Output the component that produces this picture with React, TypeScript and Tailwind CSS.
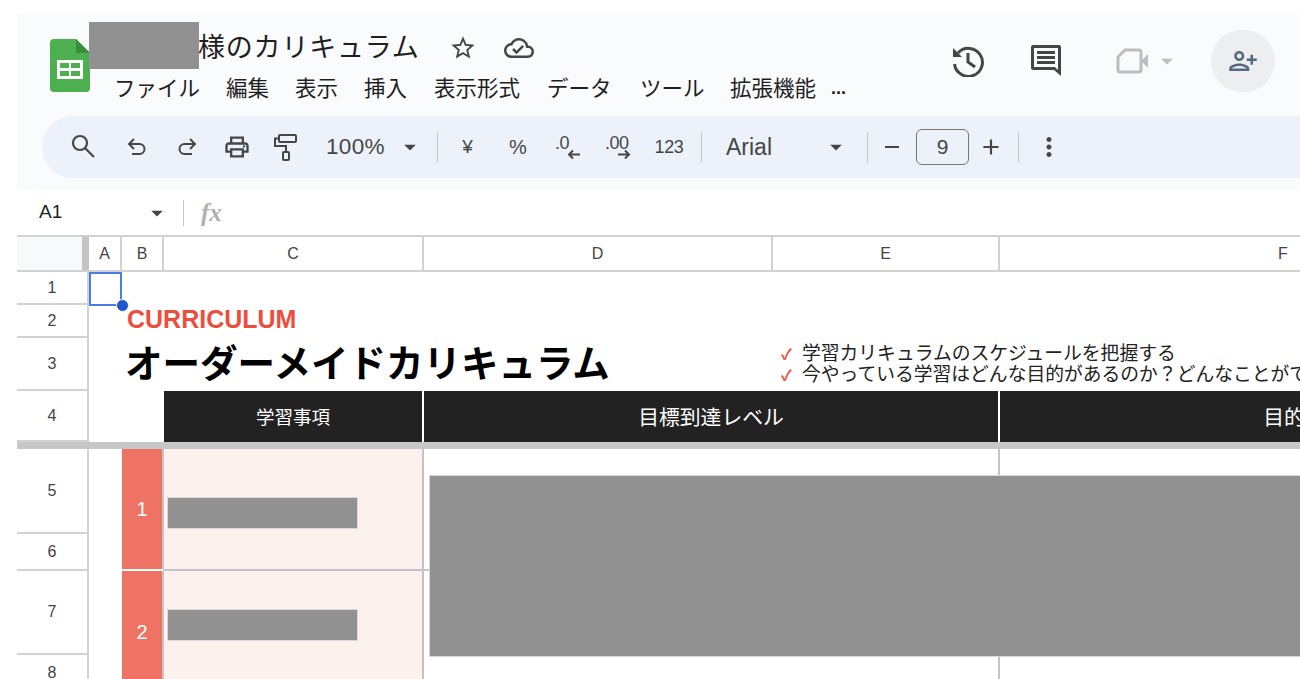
import React from "react";
import {
  MdOutlinePrint,
  MdStarBorder,
  MdOutlineCloudDone,
  MdPersonAddAlt,
  MdMoreVert,
  MdAdd,
  MdRemove,
  MdArrowDropDown,
} from "react-icons/md";

const menuItems = [
  { label: "ファイル", w: "w-[112px]" },
  { label: "編集", w: "w-[69px]" },
  { label: "表示", w: "w-[69px]" },
  { label: "挿入", w: "w-[70px]" },
  { label: "表示形式", w: "w-[113px]" },
  { label: "データ", w: "w-[93px]" },
  { label: "ツール", w: "w-[90px]" },
  { label: "拡張機能", w: "w-[101px]" },
];

const jp = "font-['Noto_Sans_CJK_JP','Noto_Sans',sans-serif]";
const sans = "font-['Liberation_Sans',Arial,sans-serif]";

const SheetsLogo = () => (
  <svg width="40" height="53" viewBox="0 0 40 53">
    <path d="M4 0H26L40 14V49a4 4 0 0 1-4 4H4a4 4 0 0 1-4-4V4a4 4 0 0 1 4-4z" fill="#4caf50" />
    <path d="M26 0L40 14H26z" fill="#388e3c" />
    <rect x="7" y="21" width="26" height="19" fill="#fff" />
    <rect x="10" y="24" width="9" height="5" fill="#4caf50" />
    <rect x="21" y="24" width="9" height="5" fill="#4caf50" />
    <rect x="10" y="32" width="9" height="5" fill="#4caf50" />
    <rect x="21" y="32" width="9" height="5" fill="#4caf50" />
  </svg>
);

const SearchIcon = () => (
  <svg width="24" height="24" viewBox="0 0 24 24" fill="none" stroke="#444746" strokeWidth="2.2">
    <circle cx="9" cy="9" r="7" />
    <path d="M14 14L23 23" />
  </svg>
);

const UndoIcon = () => (
  <svg width="20" height="20" viewBox="0 0 20 20" fill="none" stroke="#444746" strokeWidth="2">
    <path d="M2 7H12.5a5 5 0 0 1 0 10H5" />
    <path d="M7 2L2 7L7 12" />
  </svg>
);

const RedoIcon = () => (
  <svg width="20" height="20" viewBox="0 0 20 20" fill="none" stroke="#444746" strokeWidth="2">
    <path d="M18 7H7.5a5 5 0 0 0 0 10H15" />
    <path d="M13 2L18 7L13 12" />
  </svg>
);

const RollerIcon = () => (
  <svg width="23" height="27" viewBox="0 0 23 27" fill="none" stroke="#444746" strokeWidth="2">
    <rect x="5" y="1" width="17" height="7" rx="1" />
    <path d="M5 4.5H1V12H12V18" />
    <rect x="9" y="18" width="6" height="8" rx="1" />
  </svg>
);

const HistoryIcon = () => (
  <svg width="32" height="32" viewBox="0 0 32 32" fill="none">
    <path d="M6 8A14 14 0 1 1 2.5 19" stroke="#444746" strokeWidth="3" />
    <path d="M1 3L1 12L10 12z" fill="#444746" />
    <path d="M16 8V17L23 22" stroke="#444746" strokeWidth="3" />
  </svg>
);

const CommentIcon = () => (
  <svg width="32" height="32" viewBox="0 0 32 32" fill="#444746">
    <path d="M3 0H29a2 2 0 0 1 2 2V31L24 25H3a2 2 0 0 1-2-2V2a2 2 0 0 1 2-2zM4 3V22H25L28 25V3z" fillRule="evenodd" />
    <rect x="7" y="6" width="18" height="3" />
    <rect x="7" y="11" width="18" height="3" />
    <rect x="7" y="16" width="18" height="3" />
  </svg>
);

const VideoIcon = () => (
  <svg width="32" height="26" viewBox="0 0 32 26" fill="none">
    <path d="M9 2H23a2 2 0 0 1 2 2V22a2 2 0 0 1-2 2H4a2 2 0 0 1-2-2V9z" stroke="#bdbdbd" strokeWidth="3" />
    <path d="M25 13L32 6V20z" fill="#bdbdbd" />
  </svg>
);

const DecimalIcon = ({ text, right }: { text: string; right?: boolean }) => (
  <div className="relative w-[34px] h-[36px] pl-[5px] pt-[2px]">
    <span className={`${sans} block text-[18px] leading-[24px] font-medium text-[#444746] tracking-[-0.5px]`}>{text}</span>
    <svg
      className={`absolute top-[20px] ${right ? "left-[18px]" : "left-[17px]"}`}
      width="13"
      height="11"
      viewBox="0 0 13 11"
      fill="none"
      stroke="#444746"
      strokeWidth="2"
    >
      {right ? <path d="M0 5.5H11M7 1.5L11 5.5L7 9.5" /> : <path d="M13 5.5H2M6 1.5L2 5.5L6 9.5" />}
    </svg>
  </div>
);

const Sep = () => <div className="w-[1px] h-[31px] bg-[#c7c7c7]" />;

const RowNum = ({ n, className }: { n: number; className: string }) => (
  <div
    className={`${className} col-start-1 flex items-center justify-center border-b-2 border-r-2 border-[#d2d2d2] text-[16px] text-[#444]`}
  >
    {n}
  </div>
);

export default function App() {
  return (
    <div className={`w-[1300px] h-[679px] overflow-hidden bg-white pl-[17px] pt-[14px] flex flex-col ${sans}`}>
      {/* Docs header */}
      <div className="h-[176px] shrink-0 bg-[#f9fbfd] flex flex-col">
        <div className="h-[102px] flex">
          <div className="pl-[33px] pt-[25px] w-[72px] shrink-0">
            <SheetsLogo />
          </div>
          <div className="pt-[8px]">
            <div className="flex items-center h-[47px]">
              <div className="w-[110px] h-[47px] bg-[#919191]" />
              <span className={`${jp} -ml-[1px] mt-[1px] text-[27px] text-[#1f1f1f] tracking-[0.8px] whitespace-nowrap`}>様のカリキュラム</span>
              <MdStarBorder className="ml-[29px] mt-[4px] text-[#444746]" size={28} />
              <MdOutlineCloudDone className="ml-[27px] mt-[4px] text-[#444746]" size={30} />
            </div>
            <div className={`${jp} flex items-center h-[24px] mt-[6px] ml-[25px] text-[21.5px] text-[#1f1f1f] whitespace-nowrap`}>
              {menuItems.map((item) => (
                <span key={item.label} className={item.w}>
                  {item.label}
                </span>
              ))}
              <span className={`${sans} text-[18px] font-bold mt-[2px]`}>...</span>
            </div>
          </div>
          <div className="ml-auto pr-[25px] pt-[16px] flex items-start">
            <div className="flex items-center h-[62px]">
              <HistoryIcon />
              <div className="ml-[46px]">
                <CommentIcon />
              </div>
              <div className="ml-[54px]">
                <VideoIcon />
              </div>
              <MdArrowDropDown className="ml-[5px] text-[#bdbdbd]" size={28} />
              <div className="ml-[30px] w-[64px] h-[62px] rounded-full bg-[#eceef0] flex items-center justify-center">
                <MdPersonAddAlt className="text-[#56677f]" size={30} />
              </div>
            </div>
          </div>
        </div>

        {/* Toolbar */}
        <div className="ml-[25px] h-[62px] rounded-l-[31px] bg-[#edf2fa] flex items-center text-[#444746]">
          <div className="w-[53px] flex justify-end -mt-[3px]">
            <SearchIcon />
          </div>
          <div className="w-[52px] flex justify-end">
            <UndoIcon />
          </div>
          <div className="w-[50px] flex justify-end">
            <RedoIcon />
          </div>
          <div className="w-[54px] flex justify-end">
            <MdOutlinePrint size={28} />
          </div>
          <div className="w-[46px] flex justify-end">
            <RollerIcon />
          </div>
          <span className="ml-[29px] w-[62px] text-[22.5px] tracking-[0.3px]">100%</span>
          <MdArrowDropDown className="ml-[8px]" size={28} />
          <div className="ml-[13px]">
            <Sep />
          </div>
          <span className="w-[59px] text-center text-[19px]">¥</span>
          <span className="w-[42px] text-center text-[20px]">%</span>
          <div className="ml-[5px] w-[46px] flex justify-center">
            <DecimalIcon text=".0" />
          </div>
          <div className="w-[54px] flex justify-center">
            <DecimalIcon text=".00" right />
          </div>
          <span className="ml-[2px] w-[46px] text-center text-[18px] tracking-[-0.3px]">123</span>
          <div className="ml-[9px]">
            <Sep />
          </div>
          <span className="ml-[24px] w-[96px] text-[23px]">Arial</span>
          <MdArrowDropDown size={28} />
          <div className="ml-[17px]">
            <Sep />
          </div>
          <div className="w-[48px] flex justify-center">
            <MdRemove size={24} />
          </div>
          <div className="w-[53px] h-[36px] border-[1.5px] border-[#747775] rounded-[6px] flex items-center justify-center text-[21px]">
            9
          </div>
          <div className="w-[44px] flex justify-center">
            <MdAdd size={26} />
          </div>
          <div className="ml-[5px]">
            <Sep />
          </div>
          <div className="ml-[15px]">
            <MdMoreVert size={30} />
          </div>
        </div>
        <div className="h-[12px]" />
      </div>

      {/* Formula bar */}
      <div className="h-[45px] shrink-0 flex items-center">
        <span className="ml-[22px] w-[104px] text-[19px] text-[#1f1f1f]">A1</span>
        <MdArrowDropDown className="text-[#444746]" size={28} />
        <div className="ml-[12px] w-[1px] h-[26px] bg-[#c7c7c7]" />
        <span className="ml-[17px] font-['Liberation_Serif',serif] italic font-bold text-[25px] text-[#b0b0b0]">fx</span>
      </div>

      {/* Sheet grid */}
      <div className="relative flex-1 grid grid-cols-[72px_33px_42px_260px_349px_227px_568px] grid-rows-[35px_33px_33px_53px_51px_7px_85px_37px_84px_37px] border-t-2 border-[#d2d2d2] text-[#444]">
        {/* column headers */}
        <div className="col-start-1 row-start-1 bg-[#f8f9fa] border-b-2 border-[#d2d2d2] flex justify-end">
          <div className="w-[7px] bg-[#c4c4c4]" />
        </div>
        {["A", "B", "C", "D", "E", "F"].map((c) => (
          <div
            key={c}
            className="row-start-1 border-b-2 border-r-2 border-[#d2d2d2] flex items-center justify-center text-[16px]"
          >
            {c}
          </div>
        ))}

        {/* row headers */}
        <RowNum n={1} className="row-start-2" />
        <RowNum n={2} className="row-start-3" />
        <RowNum n={3} className="row-start-4" />
        <RowNum n={4} className="row-start-5" />
        <RowNum n={5} className="row-start-7" />
        <RowNum n={6} className="row-start-8" />
        <RowNum n={7} className="row-start-9" />
        <RowNum n={8} className="row-start-10" />

        {/* CURRICULUM + heading */}
        <div className="col-start-3 col-span-3 row-start-3 pl-[5px] flex items-center pb-[5px] text-[25px] font-bold text-[#ee4d3c] leading-none whitespace-nowrap">
          CURRICULUM
        </div>
        <div className={`${jp} col-start-3 col-span-3 row-start-4 pl-[3px] flex items-center pb-[8px] text-[37.5px] font-bold text-black leading-none whitespace-nowrap`}>
          オーダーメイドカリキュラム
        </div>
        <div className={`${jp} col-start-6 col-span-2 row-start-4 pl-[8px] pb-[8px] flex flex-col justify-end text-[18.8px] leading-[21px] text-[#222] whitespace-nowrap`}>
          <div>
            <span className="inline-block w-[21px] text-[#ee4d3c] text-[15px] font-bold leading-none">✓</span>学習カリキュラムのスケジュールを把握する
          </div>
          <div>
            <span className="inline-block w-[21px] text-[#ee4d3c] text-[15px] font-bold leading-none">✓</span>今やっている学習はどんな目的があるのか？どんなことができるようになるのか
          </div>
        </div>

        {/* table header */}
        <div className={`${jp} col-start-4 row-start-5 bg-[#222] border-r-2 border-white flex items-center justify-center text-white text-[18.5px]`}>
          学習事項
        </div>
        <div className={`${jp} col-start-5 col-span-2 row-start-5 bg-[#222] border-r-2 border-white flex items-center justify-center text-white text-[20.8px]`}>
          目標到達レベル
        </div>
        <div className={`${jp} col-start-7 row-start-5 bg-[#222] flex items-center justify-center text-white text-[20.8px] whitespace-nowrap`}>
          目的
        </div>

        {/* frozen row divider */}
        <div className="col-span-full row-start-6 bg-[#c7c7c7]" />

        {/* body: column A stays empty */}
        <div className="col-start-3 row-start-7 row-span-2 bg-[#ee7364] border-r-2 border-[#c4c4c4] border-b-2 border-b-white flex items-center justify-center text-white text-[20px]">
          1
        </div>
        <div className="col-start-3 row-start-9 row-span-2 bg-[#ee7364] border-r-2 border-[#c4c4c4] flex items-center justify-center text-white text-[20px]">
          2
        </div>
        <div className="col-start-4 row-start-7 row-span-2 bg-[#fdf1ed] border-r-2 border-b-2 border-[#c4c4c4] pl-[3px] pt-[48px]">
          <div className="w-[191px] h-[32px] bg-[#919191] border border-[#d8d8d8]" />
        </div>
        <div className="col-start-4 row-start-9 row-span-2 bg-[#fdf1ed] border-r-2 border-[#c4c4c4] pl-[3px] pt-[38px]">
          <div className="w-[191px] h-[32px] bg-[#919191] border border-[#d8d8d8]" />
        </div>
        <div className="col-start-5 col-span-2 row-start-7 row-span-2 border-r-2 border-b-2 border-[#c4c4c4]" />
        <div className="col-start-5 col-span-2 row-start-9 row-span-2 border-r-2 border-[#c4c4c4]" />

        {/* redacted block over D:F */}
        <div className="absolute left-[412px] top-[238px] -right-[2px] h-[182px] bg-[#919191] border border-[#d8d8d8]" />

        {/* selected cell A1 */}
        <div className="absolute left-[72px] top-[35px] w-[33px] h-[34px] border-2 border-[#4a7de8]" />
        <div className="absolute left-[99px] top-[62px] w-[13px] h-[13px] rounded-full bg-[#2156cc] border border-white" />
      </div>
    </div>
  );
}
